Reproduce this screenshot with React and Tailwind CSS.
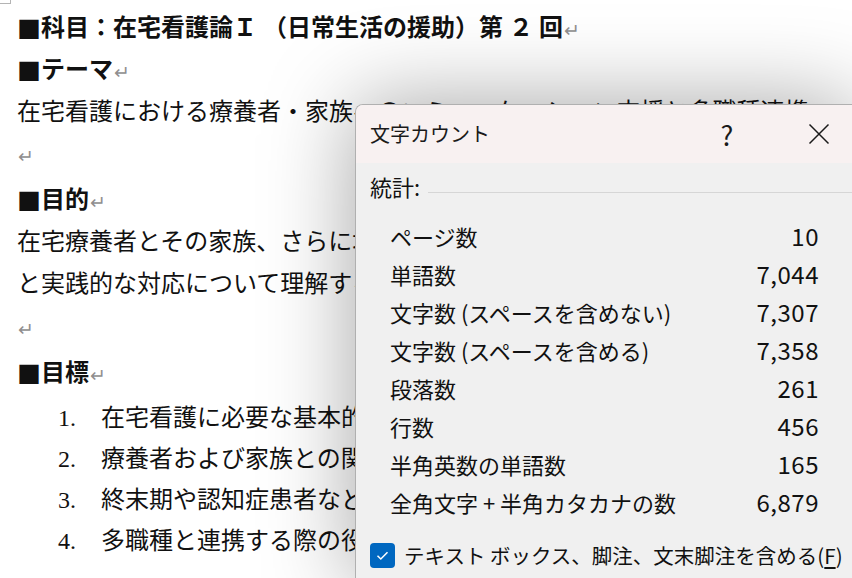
import React from "react";

const docFont = { fontFamily: '"Liberation Serif", "Noto Sans CJK JP", serif' };
const uiFont = { fontFamily: '"Noto Sans CJK JP", "Noto Sans", sans-serif' };

const Ret = () => (
  <span className="text-[19px] text-[#8f8f8f] ml-[1px] font-normal" style={uiFont}>
    ↵
  </span>
);

const Sq = () => <span style={uiFont}>■</span>;

const stats = [
  ["ページ数", "10"],
  ["単語数", "7,044"],
  ["文字数 (スペースを含めない)", "7,307"],
  ["文字数 (スペースを含める)", "7,358"],
  ["段落数", "261"],
  ["行数", "456"],
  ["半角英数の単語数", "165"],
  ["全角文字 + 半角カタカナの数", "6,879"],
];

const goals = [
  "在宅看護に必要な基本的な知識と技術を理解する。",
  "療養者および家族との関係づくりについて理解する。",
  "終末期や認知症患者など対象に応じた援助を理解する。",
  "多職種と連携する際の役割について理解する。",
];

// lines that run under the dialog are clipped at its left edge
const Line = ({ children, className = "", clip = false }) => (
  <div
    className={
      "flex items-center whitespace-nowrap h-[42px] " +
      (clip ? "w-[338px] overflow-hidden " : "") +
      className
    }
  >
    {children}
  </div>
);

export default function App() {
  return (
    <div className="relative w-[852px] h-[578px] overflow-hidden bg-white text-[#111]">
      <div className="absolute left-0 top-0 w-[11px] h-[4px] border-b border-r border-[#b4b4b4]" />

      {/* document */}
      <div className="pl-[17px] pt-[7px] text-[24px] leading-none" style={docFont}>
        <Line className="font-bold">
          <Sq />科目：在宅看護論Ｉ （日常生活の援助）第 ２ 回<Ret />
        </Line>
        <Line className="font-bold">
          <Sq />テーマ<Ret />
        </Line>
        <Line>在宅看護における療養者・家族へのコミュニケーション支援と多職種連携<Ret /></Line>
        <Line>
          <Ret />
        </Line>
        <Line className="font-bold mt-[4px]">
          <Sq />目的<Ret />
        </Line>
        <Line clip>在宅療養者とその家族、さらに地域の関係機関との連携に必要な基本的知識</Line>
        <Line clip>と実践的な対応について理解する。</Line>
        <Line className="mt-[1px]">
          <Ret />
        </Line>
        <Line className="font-bold mt-[4px]">
          <Sq />目標<Ret />
        </Line>
        <div className="mt-[3px] w-[338px] overflow-hidden">
          {goals.map((g, i) => (
            <div key={i} className="flex items-center whitespace-nowrap h-[41px]">
              <span className="w-[84px] shrink-0 pl-[41px]">{i + 1}.</span>
              <span>{g}</span>
            </div>
          ))}
        </div>
      </div>

      {/* word count dialog */}
      <div
        className="absolute left-[355px] top-[104px] w-[500px] h-[480px] rounded-tl-[8px] border-l border-t border-[#b0b0b0] bg-[#f0f0f0] shadow-[0_0_90px_rgba(0,0,0,0.36)] overflow-hidden"
        style={uiFont}
      >
        <div className="flex items-center h-[58px] bg-[#f8f1f1] pl-[14px]">
          <div className="flex-1 text-[20px] text-[#1a1a1a]">文字カウント</div>
          <div className="w-[46px] text-center text-[27px] leading-none text-[#1a1a1a] mr-[6px]">?</div>
          <div className="w-[46px] flex justify-center ml-[40px] mr-[13px]">
            <svg width="22" height="22" viewBox="0 0 22 22">
              <path d="M1.5 1.5 L20.5 20.5 M20.5 1.5 L1.5 20.5" stroke="#1a1a1a" strokeWidth="1.5" fill="none" />
            </svg>
          </div>
        </div>

        <div className="pt-[4px] text-[22px] text-[#111]">
          <div className="flex items-center h-[38px] pl-[14px]">
            <span>統計:</span>
            <div className="flex-1 h-px bg-[#d6d6d6] ml-[8px] mt-[12px]" />
          </div>
          <div className="mt-[12px]">
            {stats.map(([k, v]) => (
              <div key={k} className="flex items-center justify-between h-[38px] pl-[34px] pr-[36px]">
                <span>{k}</span>
                <span className="text-[24px] tracking-[0.5px]">{v}</span>
              </div>
            ))}
          </div>
          <div className="flex items-center h-[38px] mt-[15px] pl-[14px] gap-[9px] text-[20.5px]">
            <div className="w-[25px] h-[25px] shrink-0 rounded-[4px] bg-[#0067c0] flex items-center justify-center">
              <svg width="15" height="15" viewBox="0 0 15 15">
                <path d="M2.5 7.8 L5.8 11 L12.5 4.2" stroke="#fff" strokeWidth="1.5" fill="none" />
              </svg>
            </div>
            <span className="whitespace-nowrap">
              テキスト ボックス、脚注、文末脚注を含める(<span className="underline underline-offset-[3px]">F</span>)
            </span>
          </div>
        </div>
      </div>
    </div>
  );
}
